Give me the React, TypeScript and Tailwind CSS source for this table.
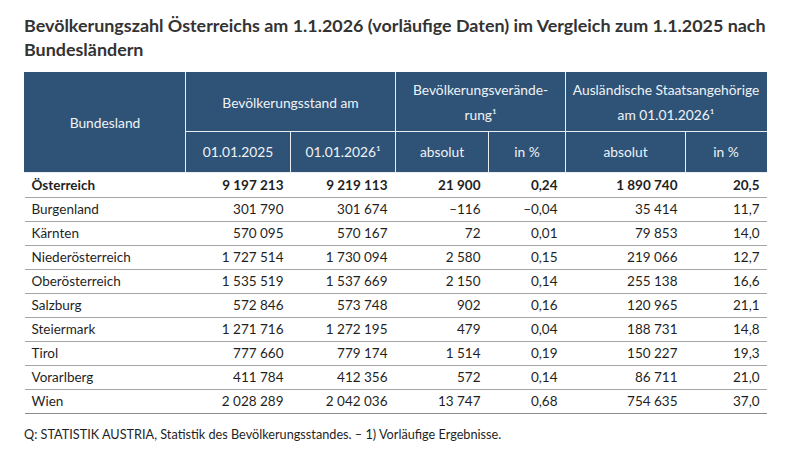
const rows: [string, string, string, string, string, string, string][] = [
  ['Burgenland', '301 790', '301 674', '–116', '–0,04', '35 414', '11,7'],
  ['Kärnten', '570 095', '570 167', '72', '0,01', '79 853', '14,0'],
  ['Niederösterreich', '1 727 514', '1 730 094', '2 580', '0,15', '219 066', '12,7'],
  ['Oberösterreich', '1 535 519', '1 537 669', '2 150', '0,14', '255 138', '16,6'],
  ['Salzburg', '572 846', '573 748', '902', '0,16', '120 965', '21,1'],
  ['Steiermark', '1 271 716', '1 272 195', '479', '0,04', '188 731', '14,8'],
  ['Tirol', '777 660', '779 174', '1 514', '0,19', '150 227', '19,3'],
  ['Vorarlberg', '411 784', '412 356', '572', '0,14', '86 711', '21,0'],
  ['Wien', '2 028 289', '2 042 036', '13 747', '0,68', '754 635', '37,0'],
]

const th = 'border border-[#e8edf2] bg-[#2e5377] text-center font-normal text-[#eef2f6]'

export default function App() {
  return (
    <div
      className="h-[450px] w-[800px] overflow-hidden bg-white px-6 pt-[13px] text-[#1f1f1f]"
      style={{ fontFamily: 'Lato, "Open Sans", sans-serif' }}
    >
      <h1 className="text-[17.9px] font-bold leading-[24px] text-[#333]">
        Bevölkerungszahl Österreichs am 1.1.2026 (vorläufige Daten) im Vergleich zum 1.1.2025 nach Bundesländern
      </h1>

      <table className="mt-[11px] w-[742px] table-fixed border-collapse text-[13.5px]">
        <colgroup>
          <col className="w-[161px]" />
          <col className="w-[105px]" />
          <col className="w-[105px]" />
          <col className="w-[93px]" />
          <col className="w-[77px]" />
          <col className="w-[120px]" />
          <col className="w-[81px]" />
        </colgroup>
        <thead className="text-[13.8px]">
          <tr className="h-[59px] leading-[25px]">
            <th rowSpan={2} className={`${th} border-l-[#2e5377] border-t-[#2e5377]`}>Bundesland</th>
            <th colSpan={2} className={`${th} border-t-[#2e5377]`}>Bevölkerungsstand am</th>
            <th colSpan={2} className={`${th} border-t-[#2e5377] px-3`}>
              Bevölkerungsverände-
              <br />
              rung¹
            </th>
            <th colSpan={2} className={`${th} border-t-[#2e5377] border-r-[#2e5377]`}>
              Ausländische Staatsangehörige
              <br />
              am 01.01.2026¹
            </th>
          </tr>
          <tr className="h-[41px]">
            <th className={th}>01.01.2025</th>
            <th className={th}>01.01.2026¹</th>
            <th className={th}>absolut</th>
            <th className={th}>in %</th>
            <th className={th}>absolut</th>
            <th className={`${th} border-r-[#2e5377]`}>in %</th>
          </tr>
        </thead>
        <tbody>
          <tr className="h-[25px] border-b border-[#a6a6a6] font-bold">
            <td className="pl-[7px]">Österreich</td>
            <td className="pr-[7px] text-right">9 197 213</td>
            <td className="pr-[8px] text-right">9 219 113</td>
            <td className="pr-[8px] text-right">21 900</td>
            <td className="pr-[8px] text-right">0,24</td>
            <td className="pr-[8px] text-right">1 890 740</td>
            <td className="pr-[7px] text-right">20,5</td>
          </tr>
          {rows.map((r, i) => (
            <tr
              key={r[0]}
              className={`h-[24px] border-b ${i === rows.length - 1 ? 'border-[#8c8c8c]' : 'border-[#a6a6a6]'}`}
            >
              <td className="pl-[7px]">{r[0]}</td>
              <td className="pr-[7px] text-right">{r[1]}</td>
              <td className="pr-[8px] text-right">{r[2]}</td>
              <td className="pr-[8px] text-right">{r[3]}</td>
              <td className="pr-[8px] text-right">{r[4]}</td>
              <td className="pr-[8px] text-right">{r[5]}</td>
              <td className="pr-[7px] text-right">{r[6]}</td>
            </tr>
          ))}
        </tbody>
      </table>

      <p className="mt-[11px] text-[12.7px]">
        Q: STATISTIK AUSTRIA, Statistik des Bevölkerungsstandes. – 1) Vorläufige Ergebnisse.
      </p>
    </div>
  )
}
